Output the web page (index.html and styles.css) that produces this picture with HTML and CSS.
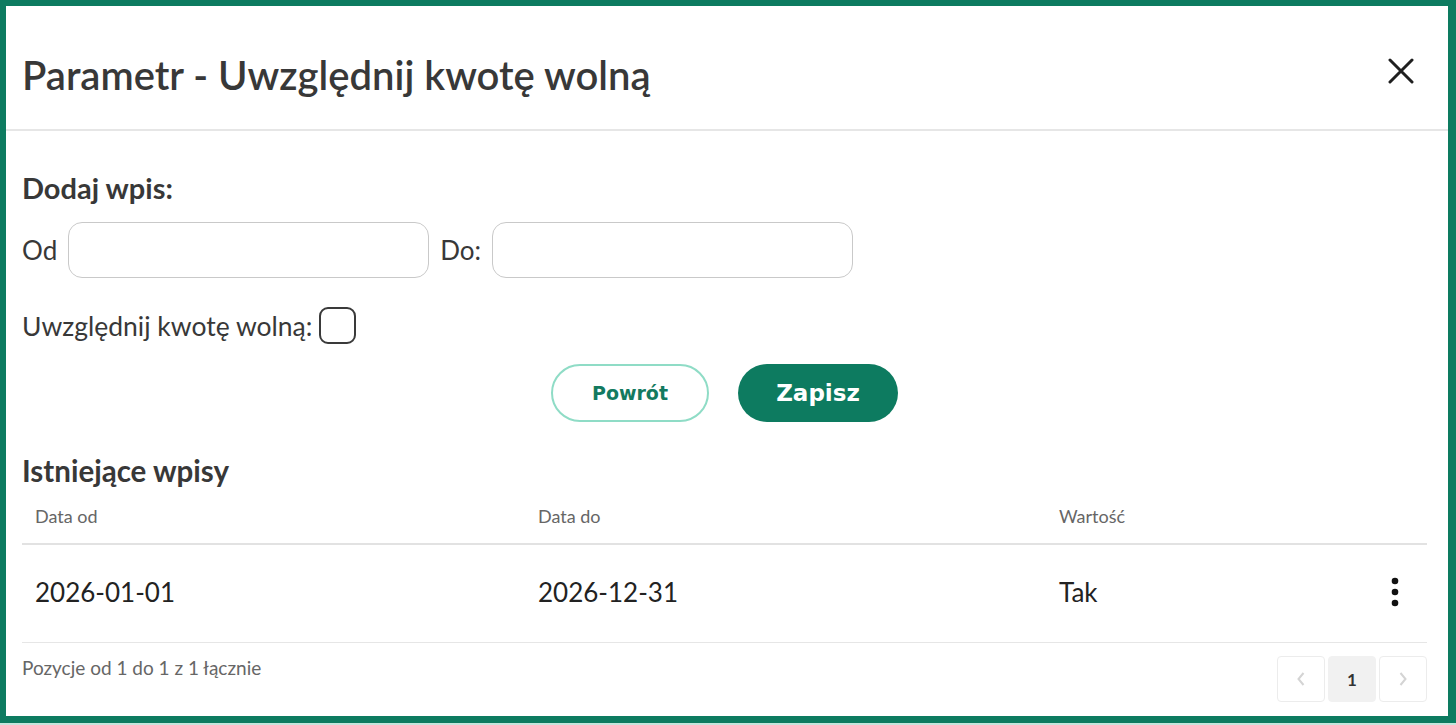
FILE: index.html
```html
<!DOCTYPE html>
<html lang="pl">
<head>
<meta charset="utf-8">
<title>Parametr - Uwzględnij kwotę wolną</title>
<link rel="stylesheet" href="styles.css">
</head>
<body>
<div class="modal">
  <header class="modal-header">
    <h1 class="modal-title">Parametr - Uwzględnij kwotę wolną</h1>
    <button class="close-btn" aria-label="Zamknij">
      <svg width="26" height="26" viewBox="0 0 26 26"><path d="M2 2L24 24M24 2L2 24" stroke="#1f1f1f" stroke-width="3" stroke-linecap="round" fill="none"/></svg>
    </button>
  </header>
  <section class="modal-body">
    <h2 class="section-title">Dodaj wpis:</h2>
    <div class="date-row">
      <label class="lbl">Od</label>
      <input class="text-input" type="text">
      <label class="lbl">Do:</label>
      <input class="text-input" type="text">
    </div>
    <div class="check-row">
      <span class="lbl lbl-check">Uwzględnij kwotę wolną:</span>
      <span class="checkbox"></span>
    </div>
    <div class="btn-row">
      <button class="btn btn-outline">Powrót</button>
      <button class="btn btn-primary">Zapisz</button>
    </div>
    <h2 class="section-title list-title">Istniejące wpisy</h2>
    <div class="table">
      <div class="tr thead">
        <div class="th">Data od</div>
        <div class="th">Data do</div>
        <div class="th">Wartość</div>
        <div class="th"></div>
      </div>
      <div class="tr trow">
        <div class="td">2026-01-01</div>
        <div class="td">2026-12-31</div>
        <div class="td">Tak</div>
        <div class="td td-menu">
          <svg width="8" height="30" viewBox="0 0 8 30"><circle cx="4" cy="4" r="3.3" fill="#111"/><circle cx="4" cy="15" r="3.3" fill="#111"/><circle cx="4" cy="26" r="3.3" fill="#111"/></svg>
        </div>
      </div>
    </div>
    <div class="table-footer">
      <div class="info">Pozycje od 1 do 1 z 1 łącznie</div>
      <div class="pager">
        <span class="pg pg-nav">
          <svg width="10" height="16" viewBox="0 0 10 16"><path d="M7.5 2L2.5 8L7.5 14" stroke="#d4d4d4" stroke-width="2" fill="none"/></svg>
        </span>
        <span class="pg pg-active">1</span>
        <span class="pg pg-nav">
          <svg width="10" height="16" viewBox="0 0 10 16"><path d="M2.5 2L7.5 8L2.5 14" stroke="#d4d4d4" stroke-width="2" fill="none"/></svg>
        </span>
      </div>
    </div>
  </section>
</div>
</body>
</html>
```
FILE: styles.css
```css
* { box-sizing: border-box; }
html, body { margin: 0; }
body {
  height: 725px;
  background: #0d7b60;
  padding: 6px 8px 7px 6px;
  border-bottom: 2px solid #c4e6dc;
  font-family: Lato, "Noto Sans", sans-serif;
  color: #333;
  overflow: hidden;
}
.modal {
  background: #fff;
  height: 710px;
  display: flex;
  flex-direction: column;
}
.modal-header {
  height: 125px;
  padding: 14px 34px 0 16px;
  display: flex;
  align-items: center;
  justify-content: space-between;
  border-bottom: 2px solid #e6e6e6;
}
.modal-title {
  margin: 0;
  font-size: 40px;
  font-weight: 600;
  line-height: 48px;
  color: #383838;
}
.close-btn {
  border: 0;
  background: none;
  padding: 0;
  width: 26px;
  height: 26px;
  margin-top: -7px;
  display: flex;
}
.modal-body {
  padding: 40px 21px 0 16px;
  flex: 1;
}
.section-title {
  margin: 0;
  font-size: 29px;
  font-weight: 700;
  line-height: 34px;
  color: #383838;
}
.date-row {
  margin-top: 17px;
  display: flex;
  align-items: center;
  gap: 11px;
}
.lbl {
  font-size: 26px;
  color: #383838;
  line-height: 32px;
}
.lbl-check { font-size: 26.5px; }
.text-input {
  width: 361px;
  height: 56px;
  border: 1px solid #c9c9c9;
  border-radius: 14px;
  background: #fff;
  margin: 0;
}
.check-row {
  margin-top: 29px;
  display: flex;
  align-items: center;
  gap: 7px;
}
.checkbox {
  width: 37px;
  height: 37px;
  border: 2px solid #3a3a3a;
  border-radius: 9px;
  display: inline-block;
}
.btn-row {
  margin-top: 20px;
  display: flex;
  justify-content: center;
  gap: 29px;
}
.btn {
  height: 58px;
  border-radius: 29px;
  font-family: "DejaVu Sans", Verdana, sans-serif;
  font-weight: 700;
  cursor: pointer;
}
.btn-outline {
  width: 158px;
  background: #fff;
  border: 2px solid #8fdcc6;
  color: #137a60;
  font-size: 19px;
}
.btn-primary {
  width: 160px;
  background: #0d7b60;
  border: 0;
  color: #fff;
  font-size: 23px;
}
.list-title {
  margin-top: 31px;
  line-height: 35px;
  font-size: 29.5px;
}
.table { width: 1405px; }
.tr {
  display: grid;
  grid-template-columns: 503px 521px 1fr 60px;
}
.thead { border-bottom: 2px solid #e2e2e2; }
.th {
  padding: 17px 13px 16px;
  font-size: 18px;
  line-height: 22px;
  color: #666;
}
.trow { border-bottom: 1px solid #e6e6e6; }
.td {
  height: 97px;
  padding: 0 13px 3px;
  display: flex;
  align-items: center;
  font-size: 26px;
  color: #222;
}
.td-menu { justify-content: center; padding: 0 4px 3px 0; }
.table-footer {
  width: 1405px;
  display: flex;
  justify-content: space-between;
  align-items: flex-start;
  padding-top: 13px;
}
.info {
  font-size: 19px;
  line-height: 24px;
  color: #666;
}
.pager {
  display: flex;
  gap: 3px;
}
.pg {
  width: 48px;
  height: 46px;
  border: 1px solid #ececec;
  border-radius: 4px;
  display: flex;
  align-items: center;
  justify-content: center;
}
.pg-active {
  background: #f1f1f1;
  border-color: #f1f1f1;
  font-size: 17px;
  font-weight: 700;
  color: #333;
}
```
